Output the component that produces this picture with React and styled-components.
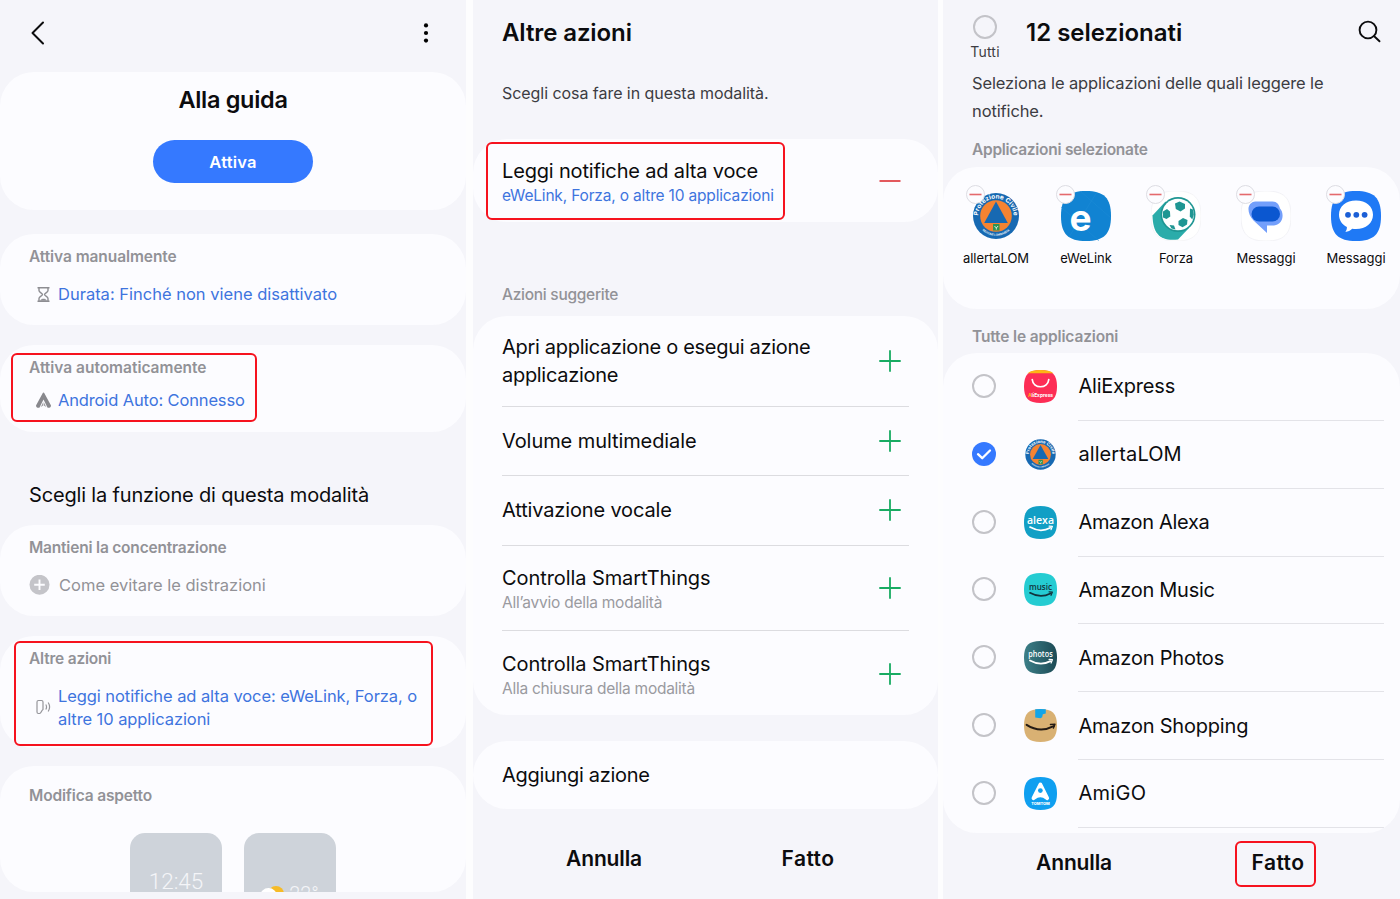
import React from 'react';
import styled, { createGlobalStyle } from 'styled-components';

const GlobalStyle = createGlobalStyle`
  * {
    box-sizing: border-box;
  }

  body {
    margin: 0;
    background: #fdfdfe;
    font-family: Inter, "Noto Sans", sans-serif;
    color: #0c0c0e;
    overflow: hidden;
  }
`;

const Page = styled.div`
  display: flex;
  width: 1400px;
  height: 899px;
`;

const Screen = styled.section`
  display: flex;
  flex: none;
  flex-direction: column;
  width: ${(p) => p.$w}px;
  height: 899px;
  margin-right: ${(p) => p.$gap || 0}px;
  background: #f5f5fa;
  overflow: hidden;
`;

const Card = styled.div`
  position: relative;
  flex: none;
  height: ${(p) => p.$h}px;
  margin-top: ${(p) => p.$gap || 0}px;
  padding: ${(p) => p.$pad || '0 29px'};
  border-radius: 34px;
  background: #fcfcff;
  overflow: ${(p) => (p.$clip ? 'hidden' : 'visible')};
`;

const Text = styled.div`
  font-size: ${(p) => p.$size || 16}px;
  font-weight: ${(p) => p.$weight || 400};
  line-height: ${(p) => p.$line || 24}px;
  letter-spacing: ${(p) => p.$track || 0}px;
  color: ${(p) => p.$color || '#0c0c0e'};
  white-space: nowrap;
`;

const Label = styled(Text)`
  font-size: 15.5px;
  font-weight: ${(p) => p.$weight || 600};
  line-height: 20px;
  color: #929297;
`;

const Outline = styled.div`
  position: absolute;
  left: ${(p) => p.$x}px;
  top: ${(p) => p.$y}px;
  width: ${(p) => p.$w}px;
  height: ${(p) => p.$h}px;
  border: 2px solid #f6121e;
  border-radius: 6px;
  pointer-events: none;
`;

/* Mode screen */

const ModeBar = styled.header`
  display: flex;
  flex: none;
  align-items: center;
  justify-content: space-between;
  height: 72px;
  padding: 0 32px 6px 29px;
`;

const Hero = styled(Card)`
  display: flex;
  flex-direction: column;
  align-items: center;
  padding-top: 12px;
`;

const StartButton = styled.button`
  width: 160px;
  height: 43px;
  margin-top: 23.5px;
  border: none;
  border-radius: 22px;
  background: #3579ff;
  color: #fff;
  font: 600 16.5px/42px Inter, sans-serif;
  letter-spacing: 0.2px;
`;

const IconLine = styled.div`
  display: flex;
  align-items: center;
  gap: ${(p) => p.$gap || 7}px;
  margin-top: ${(p) => p.$top}px;
  padding-left: ${(p) => (p.$in === undefined ? 7 : p.$in)}px;

  svg {
    flex: none;
  }
`;

const SectionTitle = styled(Text)`
  margin: 51px 29px 0;
`;

const Previews = styled.div`
  display: flex;
  justify-content: center;
  gap: 22px;
  margin-top: 27px;
`;

const Tile = styled.div`
  display: flex;
  justify-content: center;
  width: 92px;
  height: 130px;
  padding-top: ${(p) => p.$top}px;
  border-radius: 15px;
  background: #ced3da;
  color: #f4f5f8;
  font: 300 ${(p) => p.$size}px/22px Roboto, sans-serif;
`;

/* Actions screen */

const ActionsTitle = styled(Text)`
  flex: none;
  margin: 17px 29px 0;
`;

const Intro = styled(Text)`
  margin: 32px 29px 0;
`;

const SuggestedLabel = styled(Label)`
  margin: 63px 29px 0;
`;

const ActionRow = styled.div`
  display: flex;
  align-items: center;
  justify-content: space-between;
  height: ${(p) => p.$h}px;
  border-bottom: ${(p) => (p.$last ? 'none' : '1px solid #dcdce0')};
`;

const ActionText = styled.div`
  padding-top: 2.5px;
`;

const Sign = styled.svg`
  flex: none;
  width: 22px;
  height: 22px;
  margin-right: 8px;
`;

const Footer = styled.footer`
  display: grid;
  grid-template-columns: 204px 204px;
  justify-items: center;
  position: relative;
  padding-left: 29px;
  margin-top: ${(p) => p.$top}px;
`;

/* App picker screen */

const PickerBar = styled.header`
  display: flex;
  flex: none;
  height: 69px;
  padding: 15px 19px 0 27px;
`;

const SelectAll = styled.div`
  display: flex;
  flex: none;
  flex-direction: column;
  align-items: center;
  gap: 1px;
  width: 30px;
`;

const PickerTitle = styled(Text)`
  flex: 1;
  margin-left: 26px;
  padding-top: 2px;
`;

const PickerIntro = styled(Text)`
  margin: 0 29px;
`;

const PickerLabel = styled(Label)`
  margin: ${(p) => p.$top}px 29px 0;
`;

const Chosen = styled(Card)`
  display: flex;
  padding: 24px 0 0 8px;
`;

const ChosenApp = styled.div`
  display: flex;
  flex: none;
  flex-direction: column;
  align-items: center;
  position: relative;
  width: 90px;
`;

const ChosenName = styled(Text)`
  margin-top: 8px;
`;

const RemoveBadge = styled.div`
  position: absolute;
  left: 15px;
  top: -6px;
  display: flex;
  align-items: center;
  justify-content: center;
  width: 19px;
  height: 19px;
  border: 1px solid #dddde3;
  border-radius: 50%;
  background: #fcfcff;
`;

const AppRow = styled.div`
  display: flex;
  align-items: center;
  height: 67.85px;
  padding-left: 29px;
`;

const Radio = styled.div`
  flex: none;
  width: 24px;
  height: 24px;
  margin-bottom: 2px;
  border: ${(p) => (p.$on ? 'none' : '2px solid #c3c3c8')};
  border-radius: 50%;
  background: ${(p) => (p.$on ? '#3579ff' : 'transparent')};
`;

const AppIconBox = styled.div`
  flex: none;
  display: flex;
  width: 33px;
  height: 33px;
  margin: 0 21px 1px 28.4px;
`;

const AppName = styled(Text)`
  flex: 1;
  display: flex;
  align-items: center;
  height: 100%;
  margin-right: 16px;
  border-bottom: 1px solid #e3e3e8;
`;

const SQUIRCLE = 'M25 0C43 0 50 7 50 25S43 50 25 50 0 43 0 25 7 0 25 0Z';

const AppSvg = ({ size = 33, children }) => (
  <svg width={size} height={size} viewBox="0 0 50 50">{children}</svg>
);

const Smile = ({ color, y = 0 }) => (
  <g transform={`translate(0 ${y})`} fill="none" stroke={color} strokeLinecap="round" strokeLinejoin="round">
    <path d="M9 29Q25 38 40 30" strokeWidth="2.6" />
    <path d="M38 27.5l5 .3-2 5" strokeWidth="1.9" />
  </g>
);

const AllertaLom = ({ size, id }) => (
  <AppSvg size={size}>
    <circle cx="25" cy="25" r="23" fill="#1769b2" />
    <circle cx="25" cy="25" r="15.8" fill="#f58331" />
    <path d="M25 10.5L36.8 32H13.2Z" fill="#1769b2" />
    <rect x="22" y="33" width="6.5" height="6.5" fill="#2d9452" />
    <path d="M23.5 35l1.8 2 1.8-2M25.3 37v1.6" stroke="#fff" strokeWidth=".8" fill="none" />
    <path id={`${id}-top`} d="M7.4 28A17.8 17.8 0 1 1 42.6 28" fill="none" />
    <path id={`${id}-low`} d="M11.2 39.2A19.8 19.8 0 0 0 38.8 39.2" fill="none" />
    <text fill="#fff" fontSize="6.4" fontWeight="700" fontFamily="Inter, sans-serif">
      <textPath href={`#${id}-top`} startOffset="50%" textAnchor="middle" textLength="54">Protezione Civile</textPath>
    </text>
    <text fill="#fff" fontSize="2.8" fontWeight="600" fontFamily="Inter, sans-serif">
      <textPath href={`#${id}-low`} startOffset="50%" textAnchor="middle">REGIONE LOMBARDIA</textPath>
    </text>
  </AppSvg>
);

const EWeLink = () => (
  <AppSvg size={50}>
    <path d={SQUIRCLE} fill="#1183d2" />
    <path d="M19 0L50 27M0 16L38 50M36 1L8 46" stroke="#1f8cd7" strokeWidth=".5" />
    <text x="19.500" y="40" textAnchor="middle" fontSize="37" fontWeight="700" fill="#fff" fontFamily="Inter, sans-serif">e</text>
  </AppSvg>
);

const Forza = () => (
  <AppSvg size={50}>
    <path d={SQUIRCLE} fill="#fff" stroke="#eeeef2" strokeWidth=".6" />
    <path d="M1.500 24.500L14.500 10.500 38 37 27 48.500C9 50.500 2 43 1.500 24.500Z" fill="#2bacaa" />
    <circle cx="27" cy="23.500" r="17.500" fill="#1f9693" />
    <circle cx="27" cy="23.500" r="15.800" fill="#fff" />
    <g fill="#1f9693">
      <path d="M24 12.500l4.500-2 5.500 2.500v4.500l-4.500 3-4.700-2.500Z" />
      <path d="M12 20.500l4-2.500 3 2.500.3 5-3.800 2.500-3.500-1.500Z" />
      <path d="M27.500 30l4.500-3 4.500 2-.5 4.500-4.500 2.800-4-2.300Z" />
      <path d="M39 17.500l3 1 .8 5-1.500 5-2.500-3Z" />
      <path d="M18.500 34l4.500.5 1.500 4-4-1Z" />
    </g>
  </AppSvg>
);

const GoogleMessages = () => (
  <AppSvg size={50}>
    <path d={SQUIRCLE} fill="#fff" stroke="#ebebf0" strokeWidth=".6" />
    <path d="M14.500 10.500H31.500C36 10.500 38 13.500 39 17.500C43.500 22 42.500 33.500 33 34.500H26V42L12.500 29.500C5.500 22 5.500 11.500 14.500 10.500Z" fill="#739ffb" />
    <rect x="10.500" y="15.500" width="28.500" height="15" rx="7.500" fill="#0b57d0" />
  </AppSvg>
);

const SamsungMessages = () => (
  <AppSvg size={50}>
    <path d={SQUIRCLE} fill="#1f79f5" />
    <path d="M25 9.500c10 0 17 5.800 17 14.200S35 38 25 38c-1.400 0-2.600-.1-3.800-.3-2 1.900-4 2.800-6.800 3.300 1-1.500 1.500-3 1.500-5C11 33.500 8 29 8 23.700 8 15.300 15 9.500 25 9.500Z" fill="#fff" />
    <g fill="#1b5fd6">
      <circle cx="17" cy="23.800" r="2.900" />
      <circle cx="25.300" cy="23.800" r="2.900" />
      <circle cx="33.600" cy="23.800" r="2.900" />
    </g>
  </AppSvg>
);

const AliExpress = () => (
  <AppSvg>
    <path d={SQUIRCLE} fill="#fd2d56" />
    <path d="M5.500 5C9.500 1.200 16 0 25 0s15.500 1.200 19.500 5Z" fill="#fdb515" />
    <path d="M12.500 14.500c1.500 14.500 23.500 14.500 25 0" fill="none" stroke="#fff" strokeWidth="2.600" strokeLinecap="round" />
    <text x="25" y="41" textAnchor="middle" textLength="38" lengthAdjust="spacingAndGlyphs" fontSize="8" fontWeight="700" fill="#fff" fontFamily="Inter, sans-serif">
      <tspan fill="#fdb515">A</tspan>liExpress
    </text>
  </AppSvg>
);

const AmazonWord = ({ word, bg, color, width, size, y, smileY }) => (
  <AppSvg>
    <defs>
      <linearGradient id="photosBg" x1="0" x2="1">
        <stop offset="0" stopColor="#3c7f88" />
        <stop offset="1" stopColor="#1c4a55" />
      </linearGradient>
    </defs>
    <path d={SQUIRCLE} fill={bg} />
    <text x="25" y={y} textAnchor="middle" textLength={width} lengthAdjust="spacingAndGlyphs" fontSize={size} fontWeight="600" fill={color} fontFamily='"Open Sans", sans-serif'>
      {word}
    </text>
    <Smile color={color} y={smileY} />
  </AppSvg>
);

const AmazonShopping = () => (
  <AppSvg>
    <path d={SQUIRCLE} fill="#d9b173" />
    <path d="M17 .5Q25-.5 33 .5V7l-4.500 1-1 4.500-2.500 1.500-8-1Z" fill="#12a5e8" />
    <g fill="none" stroke="#241b14" strokeLinecap="round" strokeLinejoin="round">
      <path d="M4 24Q24 37 45 26" strokeWidth="3.200" />
      <path d="M40 23.500l7-.5-2.500 6" strokeWidth="2" />
    </g>
  </AppSvg>
);

const AmiGo = () => (
  <AppSvg>
    <path d={SQUIRCLE} fill="#0f9ff0" />
    <path d="M14.500 32L24.800 11.500 35 32Q24.800 23 14.500 32Z" fill="#fff" stroke="#fff" strokeWidth="6" strokeLinejoin="round" />
    <circle cx="24.800" cy="20.500" r="3.600" fill="#0f9ff0" />
    <text x="25" y="43" textAnchor="middle" textLength="28" lengthAdjust="spacingAndGlyphs" fontSize="6" fontWeight="800" fill="#fff" fontFamily="Inter, sans-serif">TOMTOM</text>
  </AppSvg>
);

const Plus = () => (
  <Sign viewBox="0 0 22 22">
    <path d="M11 .3V21.700M.3 11H21.700" stroke="#18ab62" strokeWidth="1.800" />
  </Sign>
);

const suggested = [
  { title: 'Volume multimediale', h: 69, track: -0.08 },
  { title: 'Attivazione vocale', h: 69.5, track: -0.15 },
  { title: 'Controlla SmartThings', sub: "All’avvio della modalità", h: 85.5, track: -0.08 },
  { title: 'Controlla SmartThings', sub: 'Alla chiusura della modalità', h: 86, last: true, track: -0.08 },
];

const chosenApps = [
  { name: 'allertaLOM', icon: <AllertaLom size={50} id="big" /> },
  { name: 'eWeLink', icon: <EWeLink /> },
  { name: 'Forza', icon: <Forza /> },
  { name: 'Messaggi', icon: <GoogleMessages /> },
  { name: 'Messaggi', icon: <SamsungMessages /> },
];

const apps = [
  { name: 'AliExpress', icon: <AliExpress />, track: -0.2 },
  { name: 'allertaLOM', icon: <AllertaLom size={33} id="small" />, on: true, track: 0.1 },
  {
    name: 'Amazon Alexa',
    icon: <AmazonWord word="alexa" bg="#119fc5" color="#fff" width={41} size={16} y={27} smileY={3} />,
    track: -0.3,
  },
  {
    name: 'Amazon Music',
    icon: <AmazonWord word="music" bg="#25ccd2" color="#12333b" width={35} size={14} y={25} smileY={1} />,
    track: -0.26,
  },
  {
    name: 'Amazon Photos',
    icon: <AmazonWord word="photos" bg="url(#photosBg)" color="#fff" width={37} size={12.5} y={24.5} smileY={0.5} />,
    track: -0.2,
  },
  { name: 'Amazon Shopping', icon: <AmazonShopping />, track: -0.2 },
  { name: 'AmiGO', icon: <AmiGo />, track: 0.3 },
];

const BLUE = '#3e74de';

const ModeScreen = () => (
  <Screen $w={466} $gap={7}>
    <ModeBar>
      <svg width="18" height="24" viewBox="0 0 18 24">
        <path d="M14 1.500L3.500 12 14 22.500" fill="none" stroke="#0c0c0e" strokeWidth="2" strokeLinecap="round" strokeLinejoin="round" />
      </svg>
      <svg width="16" height="22" viewBox="0 0 16 22">
        <circle cx="8" cy="3.400" r="2.100" />
        <circle cx="8" cy="11" r="2.100" />
        <circle cx="8" cy="18.600" r="2.100" />
      </svg>
    </ModeBar>
    <Hero $h={138}>
      <Text $size={23.5} $weight={600} $line={32} $track={-0.3}>Alla guida</Text>
      <StartButton>Attiva</StartButton>
    </Hero>
    <Card $h={91} $gap={24} $pad="13px 29px">
      <Label $track={-0.08}>Attiva manualmente</Label>
      <IconLine $top={15}>
        <svg width="15" height="17" viewBox="0 0 15 17" fill="none" stroke="#8d8d92" strokeWidth="1.400">
          <path d="M1.500 1.700h12M1.500 15.300h12M3 2v2.500C3 6.500 6.500 7 6.500 8.500S3 10.500 3 12.500V15M12 2v2.500c0 2-3.500 2.500-3.500 4s3.500 2 3.500 4V15" />
          <path d="M4.500 14.500c.5-2 5.500-2 6 0Z" fill="#8d8d92" strokeWidth=".5" />
        </svg>
        <Text $size={16.5} $color={BLUE}>Durata: Finché non viene disattivato</Text>
      </IconLine>
    </Card>
    <Card $h={87} $gap={20} $pad="13px 29px">
      <Label $track={-0.02}>Attiva automaticamente</Label>
      <IconLine $top={10}>
        <svg width="15" height="17" viewBox="0 0 15 17">
          <path d="M7.500.5Q8 .5 8.500 1.500L15 13.500Q15 15.500 13.500 15.800H1.500Q0 15.500 0 13.500L6.500 1.500Q7 .5 7.500.5Z" fill="#88888d" />
          <path d="M7.500 7.500L3.300 15.900H11.700Z" fill="#fcfcff" />
          <path d="M7.500 9.500L4.800 14.900 7.200 13.600V10ZM7.500 9.500L10.200 14.900 7.800 13.600V10Z" fill="#9c9ca1" />
        </svg>
        <Text $size={16.5} $color={BLUE} $track={-0.14}>Android Auto: Connesso</Text>
      </IconLine>
      <Outline $x={11} $y={8} $w={246} $h={69} />
    </Card>
    <SectionTitle $size={20} $track={-0.17}>Scegli la funzione di questa modalità</SectionTitle>
    <Card $h={91} $gap={18} $pad="13px 29px">
      <Label $track={-0.2}>Mantieni la concentrazione</Label>
      <IconLine $top={15} $in={0} $gap={9}>
        <svg width="21" height="21" viewBox="0 0 21 21">
          <circle cx="10.500" cy="9.800" r="10" fill="#c4c4c9" />
          <path d="M10.500 4.500v10.600M5.200 9.800h10.600" stroke="#fcfcff" strokeWidth="1.900" />
        </svg>
        <Text $size={16.5} $color="#929297">Come evitare le distrazioni</Text>
      </IconLine>
    </Card>
    <Card $h={112} $gap={20} $pad="13px 29px">
      <Label $track={-0.2}>Altre azioni</Label>
      <IconLine $top={16}>
        <svg width="15" height="18" viewBox="0 0 15 18" fill="none" stroke="#95959a" strokeWidth="1.200">
          <path d="M7 5.500V3Q7 1.500 5.500 1.500H2.500Q1 1.500 1 3V13Q1 14.500 2.500 14.500H3.500C5.500 14.500 5 11.500 7 10.500V5.500M9.800 5.500q1.500 2.500 0 5M12.200 3.500q2.800 4.500 0 9" />
        </svg>
        <Text $size={16.5} $line={23} $color={BLUE} $track={-0.08}>
          Leggi notifiche ad alta voce: eWeLink, Forza, o<br />altre 10 applicazioni
        </Text>
      </IconLine>
      <Outline $x={14} $y={5} $w={419} $h={105} />
    </Card>
    <Card $h={126} $gap={18} $pad="20px 29px 0" $clip>
      <Label $track={-0.16}>Modifica aspetto</Label>
      <Previews>
        <Tile $size={22.5} $top={36.5}>12:45</Tile>
        <Tile $size={20} $top={50}>
          <svg width="28" height="20" viewBox="0 0 28 20">
            <circle cx="15" cy="11" r="8" fill="#f6bb27" />
            <circle cx="7.500" cy="13.500" r="8.500" fill="#fff" />
          </svg>
          22°
        </Tile>
      </Previews>
    </Card>
  </Screen>
);

const ActionsScreen = () => (
  <Screen $w={465} $gap={5}>
    <ActionsTitle as="h1" $size={24} $weight={600} $line={32} $track={-0.1}>Altre azioni</ActionsTitle>
    <Intro $size={16} $track={-0.05} $color="#3c3c42">Scegli cosa fare in questa modalità.</Intro>
    <Card $h={83} $gap={34}>
      <ActionRow $h={83} $last>
        <ActionText>
          <Text $size={20} $line={28} $track={-0.17}>Leggi notifiche ad alta voce</Text>
          <Text $size={15.5} $line={22} $track={-0.18} $color={BLUE}>eWeLink, Forza, o altre 10 applicazioni</Text>
        </ActionText>
        <Sign viewBox="0 0 22 22">
          <path d="M.5 11H21.500" stroke="#e0474b" strokeWidth="1.800" />
        </Sign>
      </ActionRow>
      <Outline $x={13} $y={3} $w={299} $h={78} />
    </Card>
    <SuggestedLabel $weight={500} $track={-0.28}>Azioni suggerite</SuggestedLabel>
    <Card $h={399} $gap={11}>
      <ActionRow $h={91}>
        <Text $size={20} $line={28} $track={-0.3}>Apri applicazione o esegui azione<br />applicazione</Text>
        <Plus />
      </ActionRow>
      {suggested.map((a, i) => (
        <ActionRow key={i} $h={a.h} $last={a.last}>
          {a.sub ? (
            <ActionText>
              <Text $size={20} $line={27} $track={a.track}>{a.title}</Text>
              <Text $size={15.5} $line={22} $track={-0.25} $color="#9a9a9f">{a.sub}</Text>
            </ActionText>
          ) : (
            <Text $size={20} $line={27} $track={a.track}>{a.title}</Text>
          )}
          <Plus />
        </ActionRow>
      ))}
    </Card>
    <Card $h={68} $gap={26}>
      <Text $size={20} $line={69} $track={-0.3}>Aggiungi azione</Text>
    </Card>
    <Footer $top={36}>
      <Text $size={21} $weight={600} $line={28} $track={-0.15}>Annulla</Text>
      <Text $size={21} $weight={600} $line={28} $track={0.4}>Fatto</Text>
    </Footer>
  </Screen>
);

const PickerScreen = () => (
  <Screen $w={457}>
    <PickerBar>
      <SelectAll>
        <Radio />
        <Text $size={14} $line={20} $track={0.2} $color="#3c3c42">Tutti</Text>
      </SelectAll>
      <PickerTitle $size={24} $weight={600} $line={32}>12 selezionati</PickerTitle>
      <svg width="24" height="36" viewBox="0 0 24 36" fill="none" stroke="#0c0c0e" strokeWidth="1.900" strokeLinecap="round">
        <circle cx="11" cy="15" r="8.400" />
        <path d="M17.200 21.200L22.500 26.300" />
      </svg>
    </PickerBar>
    <PickerIntro $size={16.5} $line={28} $track={-0.12} $color="#3c3c42">
      Seleziona le applicazioni delle quali leggere le<br />notifiche.
    </PickerIntro>
    <PickerLabel $top={14.5} $track={-0.28}>Applicazioni selezionate</PickerLabel>
    <Chosen $h={142} $gap={7}>
      {chosenApps.map((app, i) => (
        <ChosenApp key={i}>
          {app.icon}
          <RemoveBadge>
            <svg width="13" height="3" viewBox="0 0 13 3">
              <path d="M.5 1.500h12" stroke="#e4696d" strokeWidth="1.600" />
            </svg>
          </RemoveBadge>
          <ChosenName $size={13} $line={18} $track={-0.05}>{app.name}</ChosenName>
        </ChosenApp>
      ))}
    </Chosen>
    <PickerLabel $top={18} $track={-0.15}>Tutte le applicazioni</PickerLabel>
    <Card $h={480} $gap={6.5} $pad="0" $clip>
      {apps.map((app) => (
        <AppRow key={app.name}>
          <Radio $on={app.on}>
            {app.on && (
              <svg width="24" height="24" viewBox="0 0 24 24">
                <path d="M6 12.200l4.200 4 7.800-7.700" fill="none" stroke="#fff" strokeWidth="2.300" strokeLinecap="round" strokeLinejoin="round" />
              </svg>
            )}
          </Radio>
          <AppIconBox>{app.icon}</AppIconBox>
          <AppName $size={20} $track={app.track}>{app.name}</AppName>
        </AppRow>
      ))}
    </Card>
    <Footer $top={16}>
      <Text $size={21} $weight={600} $line={28} $track={-0.15}>Annulla</Text>
      <Text $size={21} $weight={600} $line={28} $track={0.4}>Fatto</Text>
      <Outline $x={292} $y={-8} $w={81} $h={46} />
    </Footer>
  </Screen>
);

const App = () => (
  <>
    <GlobalStyle />
    <Page>
      <ModeScreen />
      <ActionsScreen />
      <PickerScreen />
    </Page>
  </>
);

export default App;
